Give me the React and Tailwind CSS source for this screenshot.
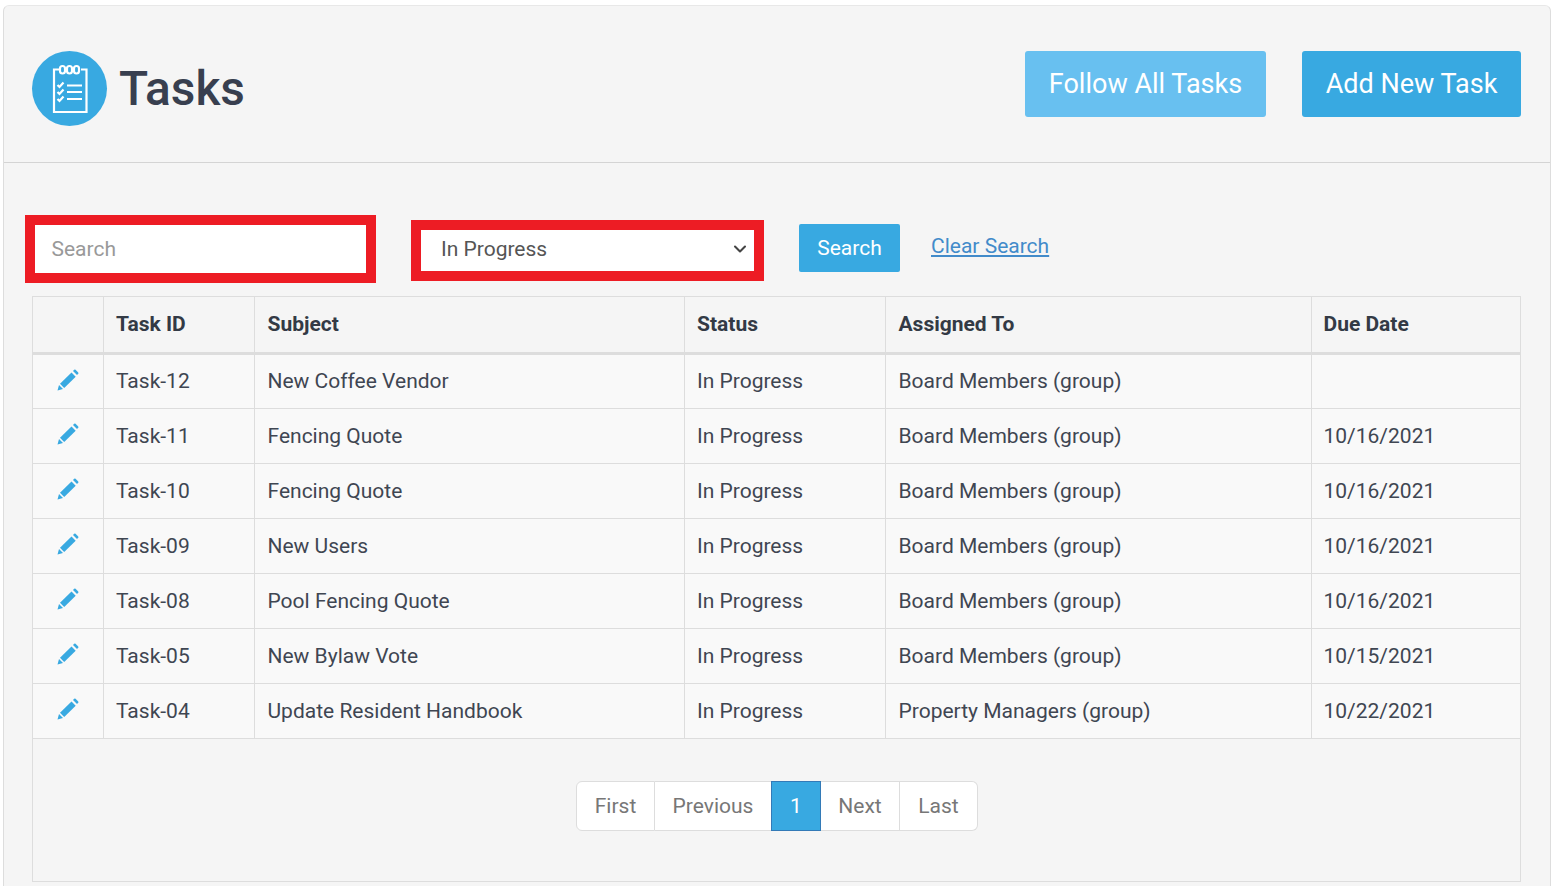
import { ChevronDown } from 'lucide-react'

const ROWS = [
  ['Task-12', 'New Coffee Vendor', 'Board Members (group)', ''],
  ['Task-11', 'Fencing Quote', 'Board Members (group)', '10/16/2021'],
  ['Task-10', 'Fencing Quote', 'Board Members (group)', '10/16/2021'],
  ['Task-09', 'New Users', 'Board Members (group)', '10/16/2021'],
  ['Task-08', 'Pool Fencing Quote', 'Board Members (group)', '10/16/2021'],
  ['Task-05', 'New Bylaw Vote', 'Board Members (group)', '10/15/2021'],
  ['Task-04', 'Update Resident Handbook', 'Property Managers (group)', '10/22/2021'],
]

function TasksIcon() {
  return (
    <div className="w-[75px] h-[75px] rounded-full bg-[#38a9e1] flex items-center justify-center shrink-0">
      <svg width="75" height="75" viewBox="0 0 75 75" fill="none" stroke="#fff" strokeWidth="2.2">
        <path d="M27 18.500H22V61H54.500V18.500H49" />
        <path d="M33 18.500h2M40 18.500h2" strokeWidth="1.600" />
        <rect x="28" y="15" width="5" height="7.500" rx="2.500" />
        <rect x="35" y="15" width="5" height="7.500" rx="2.500" />
        <rect x="42" y="15" width="5" height="7.500" rx="2.500" />
        <path d="M25.500 34l2 2 4-4.500M25.500 41l2 2 4-4.500M25.500 48l2 2 4-4.500" />
        <path d="M35 34.500h15M35 41h15M35 48h15" />
      </svg>
    </div>
  )
}

function PencilIcon() {
  return (
    <svg width="24" height="24" viewBox="0 0 24 24" fill="#38a9e1">
      <path d="M1.500 22.500l1.500-5.500 4 4z" />
      <path d="M4 15.800L15.500 4.500l4.200 4.200L8.200 20z" />
      <path d="M17 3l1.200-1.200a1 1 0 0 1 1.400 0l2.600 2.600a1 1 0 0 1 0 1.400L21 7z" />
    </svg>
  )
}

function PageLink({ children, className = '' }) {
  return (
    <a className={`flex items-center justify-center pt-[2px] text-[21px] text-[#777] bg-white border-y border-[#ddd] ${className}`}>
      {children}
    </a>
  )
}

export default function App() {
  return (
    <div className="bg-white pt-[5px] pl-[3px] pr-[3px] h-[886px] overflow-hidden font-['Roboto',sans-serif] text-[#3f4652]">
      <div className="bg-[#f5f5f5] border border-[#ddd] border-t-[#e8e8e8] rounded-t-[6px] h-[900px]">
        {/* Header */}
        <div className="h-[157px] border-b border-[#d4d4d4] pl-[28px] pr-[29px] flex items-center justify-between">
          <div className="flex items-center gap-[12px] mt-[8px]">
            <TasksIcon />
            <h1 className="text-[47.800px] leading-none font-medium text-[#383f4f] mt-[4px]">Tasks</h1>
          </div>
          <div className="flex items-center gap-[36px]">
            <button className="w-[241px] h-[66px] rounded-[3px] bg-[#68c0f0] text-white text-[27px]">Follow All Tasks</button>
            <button className="w-[219px] h-[66px] rounded-[3px] bg-[#38a9e1] text-white text-[27px]">Add New Task</button>
          </div>
        </div>

        <div className="pl-[28px] pr-[29px]">
          {/* Filters */}
          <div className="flex items-start h-[133px] -ml-[7px]">
            <div className="w-[351px] h-[68px] mt-[52px] border-[10px] border-[#ed1c24] bg-white flex items-center pl-[16.500px] pt-[2px] text-[21px] text-[#999]">
              Search
            </div>
            <div className="w-[353px] h-[61px] mt-[57px] ml-[35px] border-[10px] border-[#ed1c24] bg-white flex items-center justify-between pl-[20px] pr-[4px] pb-[2px] text-[21px] text-[#555]">
              In Progress
              <ChevronDown size={20} strokeWidth={2.5} className="text-[#444] -mt-[1px]" />
            </div>
            <button className="w-[101px] h-[48px] mt-[61px] ml-[35px] pt-[2px] rounded-[2px] bg-[#38a9e1] text-white text-[21px]">Search</button>
            <a className="mt-[68px] ml-[31px] text-[21px] leading-[30px] text-[#428bca] underline">Clear Search</a>
          </div>

          {/* Table */}
          <div className="w-[1489px] h-[586px] border border-[#ddd]">
            <table className="w-full table-fixed border-collapse text-[21px]">
              <colgroup>
                <col className="w-[70px]" />
                <col className="w-[151px]" />
                <col className="w-[430px]" />
                <col className="w-[201px]" />
                <col className="w-[426px]" />
                <col />
              </colgroup>
              <thead>
                <tr className="h-[56px] border-b-[3px] border-[#ddd] text-left text-[#333a45]">
                  <th className="border-r border-[#ddd]" />
                  <th className="pl-[12.500px] border-r border-[#ddd] font-bold">Task ID</th>
                  <th className="pl-[13px] border-r border-[#ddd] font-bold">Subject</th>
                  <th className="pl-[12.500px] border-r border-[#ddd] font-bold">Status</th>
                  <th className="pl-[13px] border-r border-[#ddd] font-bold">Assigned To</th>
                  <th className="pl-[12px] font-bold">Due Date</th>
                </tr>
              </thead>
              <tbody className="bg-[#f9f9f9]">
                {ROWS.map((r) => (
                  <tr key={r[0]} className="h-[55px] border-b border-[#ddd]">
                    <td className="border-r border-[#ddd]">
                      <div className="flex justify-center -mt-[3px]"><PencilIcon /></div>
                    </td>
                    <td className="pl-[12.500px] pt-[2px] border-r border-[#ddd]">{r[0]}</td>
                    <td className="pl-[13px] pt-[2px] border-r border-[#ddd]">{r[1]}</td>
                    <td className="pl-[12.500px] pt-[2px] border-r border-[#ddd]">In Progress</td>
                    <td className="pl-[13px] pt-[2px] border-r border-[#ddd]">{r[2]}</td>
                    <td className="pl-[12px] pt-[2px]">{r[3]}</td>
                  </tr>
                ))}
              </tbody>
            </table>

            {/* Pagination */}
            <div className="flex justify-center mt-[42px] ml-[1px]">
              <div className="flex h-[50px]">
                <PageLink className="w-[79px] border-l border-r rounded-l-[6px]">First</PageLink>
                <PageLink className="w-[116px]">Previous</PageLink>
                <a className="flex items-center justify-center w-[50px] pt-[2px] bg-[#38a9e1] border border-[#337ab7] text-white text-[21px]">1</a>
                <PageLink className="w-[79px] border-r">Next</PageLink>
                <PageLink className="w-[78px] border-r rounded-r-[6px]">Last</PageLink>
              </div>
            </div>
          </div>
        </div>
      </div>
    </div>
  )
}
